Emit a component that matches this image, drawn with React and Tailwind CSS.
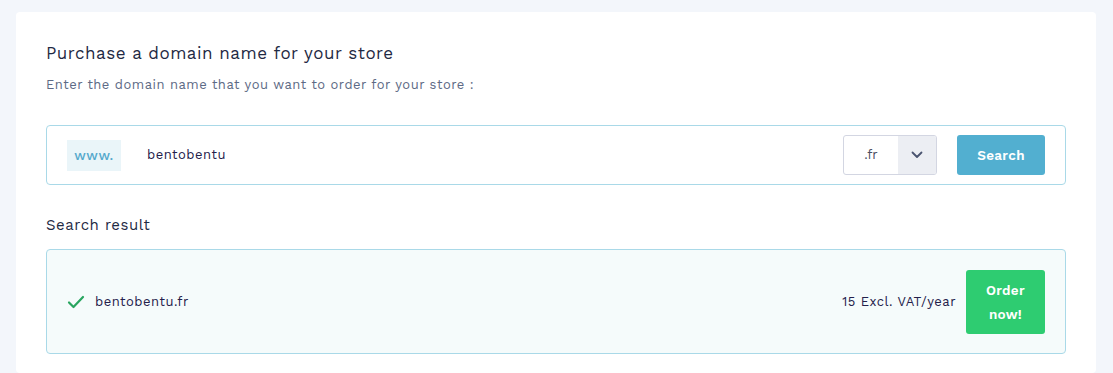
import React from "react";

export default function App() {
  return (
    <div className="min-h-[373px] w-full bg-[#f3f6fb] pt-3 pl-4 pr-[17px]" style={{ fontFamily: '"Work Sans", Inter, "Open Sans", sans-serif' }}>
      <div className="rounded bg-white px-[30px] pt-[30px] pb-[19px]">
        <h1 className="text-[17px] leading-[22px] text-[#1f2a44] tracking-[0.5px]">Purchase a domain name for your store</h1>
        <p className="mt-[12px] text-[13px] leading-[18px] text-[#5d6a85] tracking-[0.5px]">Enter the domain name that you want to order for your store :</p>

        <div className="mt-[31px] flex h-[60px] items-center rounded border border-[#a9d9e8] pl-5 pr-5">
          <div className="flex h-[31px] w-[54px] items-center justify-center bg-[#eaf5f9] text-[13.5px] font-medium tracking-[0.5px] text-[#55a9cc]">www.</div>
          <div className="ml-[26px] flex-1 text-[13px] tracking-[0.5px] text-[#23204a]">bentobentu</div>
          <div className="flex h-[40px] w-[94px] overflow-hidden rounded-[3px] border border-[#d3d6e2]">
            <div className="flex flex-1 items-center justify-center text-[13px] text-[#4a4e63]">.fr</div>
            <div className="flex w-[38px] items-center justify-center bg-[#eceef3]">
              <svg width="12" height="8" viewBox="0 0 12 8" fill="none">
                <path d="M1.5 1.5 L6 6 L10.5 1.5" stroke="#4a5470" strokeWidth="1.8" strokeLinecap="round" strokeLinejoin="round" />
              </svg>
            </div>
          </div>
          <button className="ml-5 flex h-[40px] w-[88px] items-center justify-center rounded-[3px] bg-[#52afd0] text-[13.5px] font-semibold tracking-[0.3px] text-white">Search</button>
        </div>

        <h2 className="mt-[30px] text-[15px] leading-[20px] text-[#1f2a44] tracking-[0.5px]">Search result</h2>

        <div className="mt-[14px] flex h-[105px] items-center rounded border border-[#a9d9e8] bg-[#f5fbfb] pl-5 pr-5">
          <svg width="18" height="14" viewBox="0 0 18 14" fill="none" className="mr-[10px]">
            <path d="M2 7.5 L6.5 12 L16 2" stroke="#28a55f" strokeWidth="2.2" strokeLinecap="round" strokeLinejoin="round" />
          </svg>
          <div className="flex-1 text-[13px] tracking-[0.5px] text-[#23204a]">bentobentu.fr</div>
          <div className="text-[13px] tracking-[0.5px] text-[#23204a]">15 Excl. VAT/year</div>
          <button className="ml-[10px] flex h-[64px] w-[79px] flex-col items-center justify-center rounded-[3px] bg-[#2ecc71] text-[13.5px] font-semibold leading-[24px] tracking-[0.3px] text-white">
            <span>Order</span>
            <span>now!</span>
          </button>
        </div>
      </div>
    </div>
  );
}
